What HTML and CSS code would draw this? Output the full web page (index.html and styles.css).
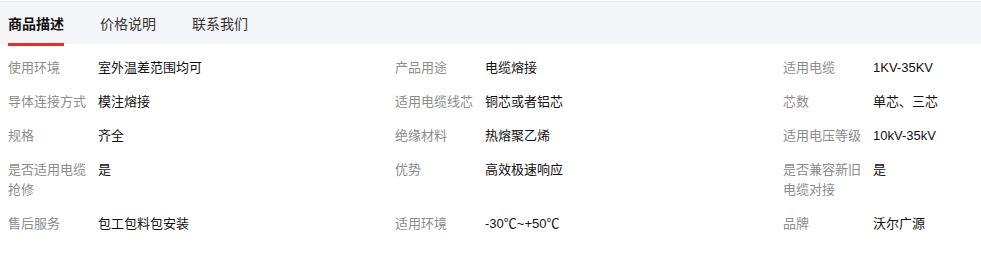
FILE: index.html
```html
<!DOCTYPE html>
<html lang="zh">
<head>
<meta charset="utf-8">
<link rel="stylesheet" href="styles.css">
</head>
<body>
<div class="tabs">
  <div class="tab active">商品描述</div>
  <div class="tab">价格说明</div>
  <div class="tab">联系我们</div>
</div>
<div class="attrs">
  <div class="item"><div class="label">使用环境</div><div class="value">室外温差范围均可</div></div>
  <div class="item"><div class="label">产品用途</div><div class="value">电缆熔接</div></div>
  <div class="item"><div class="label">适用电缆</div><div class="value">1KV-35KV</div></div>

  <div class="item"><div class="label">导体连接方式</div><div class="value">模注熔接</div></div>
  <div class="item"><div class="label">适用电缆线芯</div><div class="value">铜芯或者铝芯</div></div>
  <div class="item"><div class="label">芯数</div><div class="value">单芯、三芯</div></div>

  <div class="item"><div class="label">规格</div><div class="value">齐全</div></div>
  <div class="item"><div class="label">绝缘材料</div><div class="value">热熔聚乙烯</div></div>
  <div class="item"><div class="label">适用电压等级</div><div class="value">10kV-35kV</div></div>

  <div class="item"><div class="label">是否适用电缆抢修</div><div class="value">是</div></div>
  <div class="item"><div class="label">优势</div><div class="value">高效极速响应</div></div>
  <div class="item"><div class="label">是否兼容新旧电缆对接</div><div class="value">是</div></div>

  <div class="item"><div class="label">售后服务</div><div class="value">包工包料包安装</div></div>
  <div class="item"><div class="label">适用环境</div><div class="value">-30℃~+50℃</div></div>
  <div class="item"><div class="label">品牌</div><div class="value">沃尔广源</div></div>
</div>
</body>
</html>
```

FILE: styles.css
```css
html, body {
  margin: 0;
  padding: 0;
  background: #ffffff;
  font-family: "Liberation Sans", "Noto Sans CJK SC", sans-serif;
  overflow: hidden;
}

.tabs {
  display: flex;
  gap: 36px;
  height: 42px;
  margin-top: 1px;
  border-top: 1px solid #e9eaee;
  background: #f4f5f8;
  padding: 0 8px;
}

.tab {
  font-size: 14px;
  line-height: 44px;
  color: #333333;
  height: 42px;
}

.tab.active {
  font-weight: bold;
  color: #111111;
  position: relative;
}

.tab.active::after {
  content: "";
  position: absolute;
  left: 0;
  right: 0;
  bottom: -2px;
  height: 3px;
  background: #f02a2a;
}

.attrs {
  display: grid;
  grid-template-columns: 387px 388px 1fr;
  padding: 7px 8px 0;
}

.item {
  display: flex;
  padding: 7px 0;
  font-size: 13px;
  line-height: 20px;
}

.label {
  width: 80px;
  margin-right: 10px;
  color: #8c8c8c;
  flex: none;
}

.value {
  color: #111111;
}
```
